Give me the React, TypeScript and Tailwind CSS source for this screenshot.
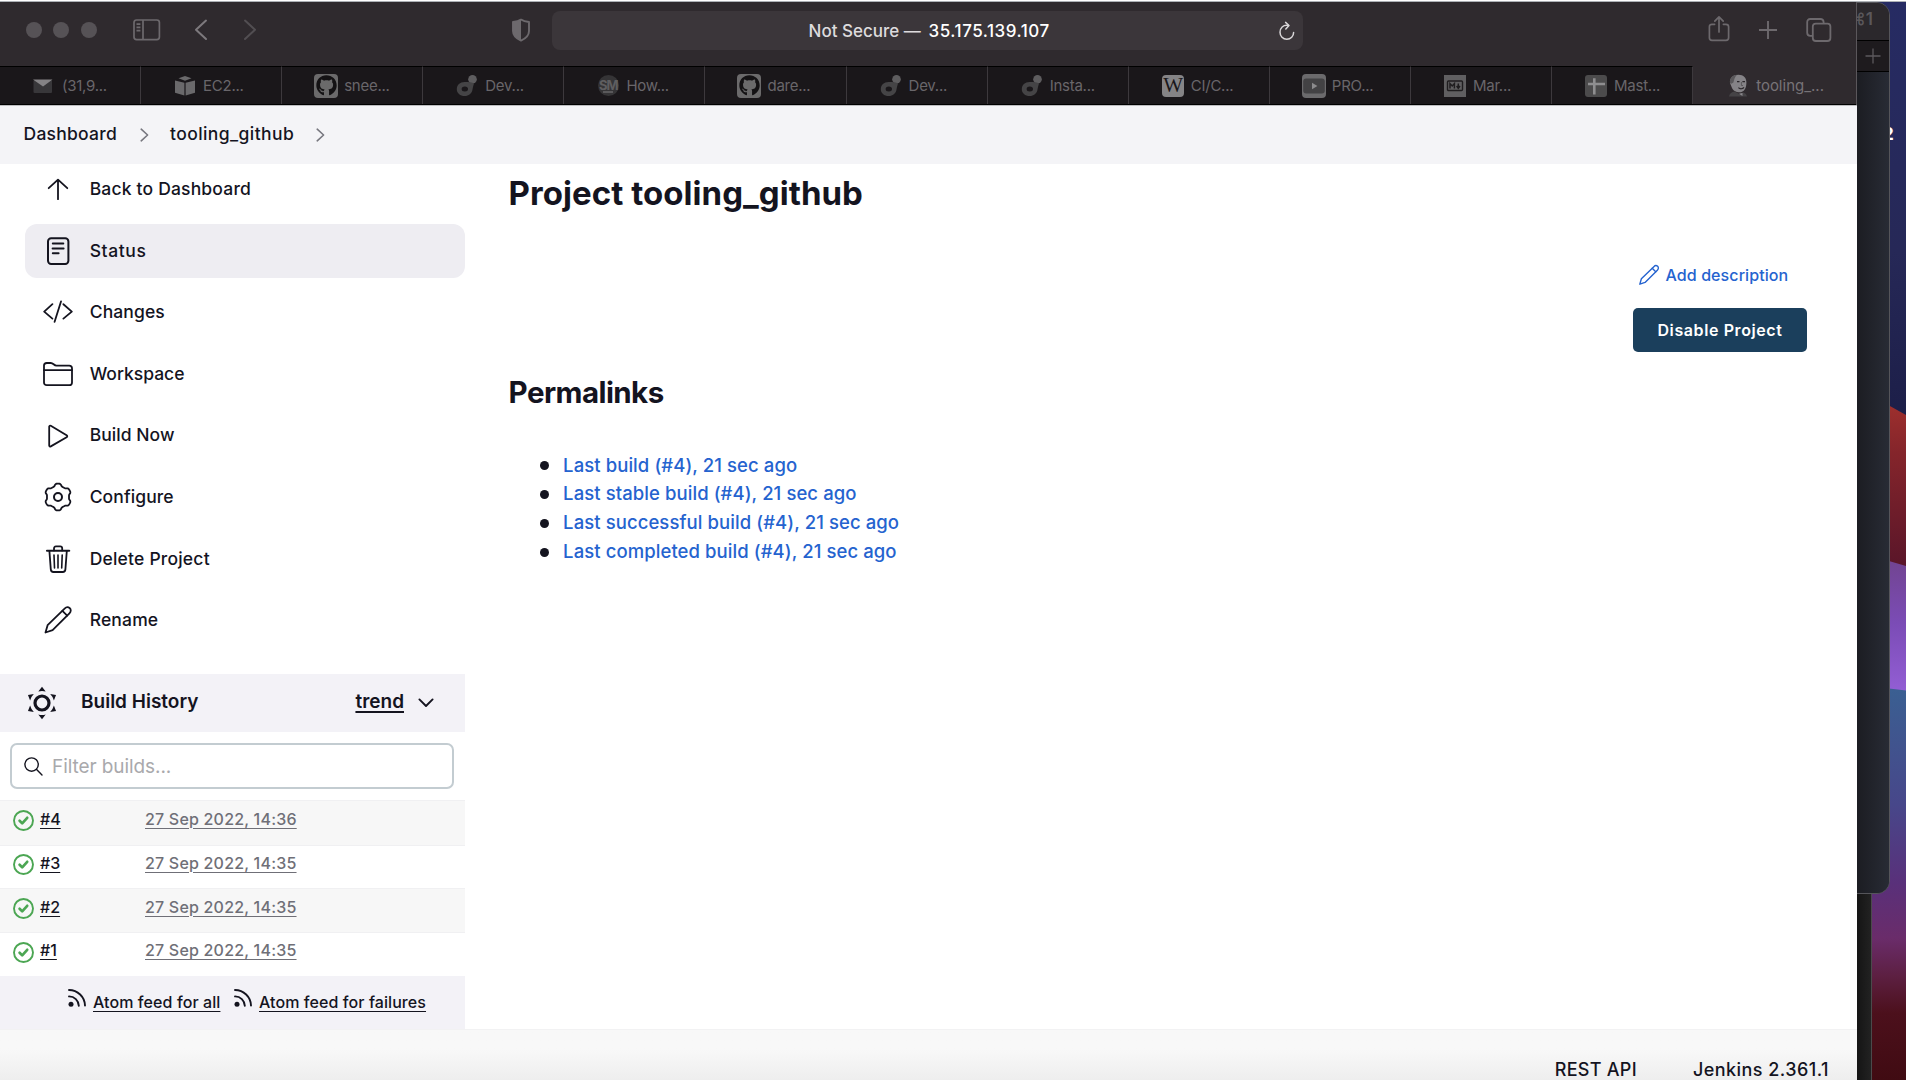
import React from "react";
import { FaGithub } from "react-icons/fa";

const GEAR_PATH =
  Array.from({ length: 120 }, (_, i) => {
    const a = (i / 120) * Math.PI * 2;
    const r = 12.2 + 1.2 * Math.tanh(2.2 * Math.cos(6 * a));
    return `${i ? "L" : "M"}${(15 + r * Math.sin(a)).toFixed(2)} ${(15 - r * Math.cos(a)).toFixed(2)}`;
  }).join("") + "Z";

function Icon({ children, size = 30, sw = 1.8 }: { children: React.ReactNode; size?: number; sw?: number }) {
  return (
    <svg width={size} height={size} viewBox="0 0 30 30" fill="none" stroke="currentColor" strokeWidth={sw} strokeLinecap="round" strokeLinejoin="round" className="shrink-0">
      {children}
    </svg>
  );
}

const PENCIL = (
  <>
    <path d="M2.5 27.5L4.6 20.2L21.6 3.6C23.2 2 25.3 1.9 26.8 3.2C28.2 4.6 28 6.8 26.4 8.4L9.6 25.1Z" />
    <path d="M19.4 5.8L24.2 10.6" />
  </>
);

const NAV = [
  { label: "Back to Dashboard", cls: "tracking-[0.18px]", icon: <path d="M5.7 14.2L15 5.6L24.3 14.2M15 5.8V25.2" /> },
  {
    label: "Status",
    cls: "tracking-[0.6px] font-[550]",
    active: true,
    icon: (
      <>
        <rect x="5" y="2.2" width="20.4" height="25.8" rx="3.2" strokeWidth="2" />
        <path d="M9.8 7.4H20.3M9.6 12.4H20.6M9.8 17.2H15.6" strokeWidth="2" />
      </>
    ),
  },
  { label: "Changes", cls: "tracking-[0.12px]", icon: <path d="M9.4 7.2L1.2 14.6L9.4 21.6M20.4 7.2L28.8 14.6L20.4 21.6M18 4.4L11.6 24.8" /> },
  {
    label: "Workspace",
    cls: "tracking-[0px]",
    icon: (
      <>
        <path d="M1 8V6.6C1 4.9 2.2 4 3.8 4H7.8C10.4 4 10.8 6.6 13.4 6.6H26.2C28 6.6 29 7.6 29 9.2V23.4C29 25 28 26.2 26.2 26.2H3.8C2 26.2 1 25 1 23.4Z" />
        <path d="M1 11.2H29" />
      </>
    ),
  },
  { label: "Build Now", cls: "tracking-[0.05px]", icon: <path d="M6.2 5.6C6.2 4.7 7 4.4 7.8 4.8L23.6 14.2C24.5 14.8 24.5 15.6 23.6 16.2L7.8 25.4C7 25.8 6.2 25.5 6.2 24.6Z" /> },
  {
    label: "Configure",
    cls: "tracking-[0.1px]",
    icon: (
      <>
        <path d={GEAR_PATH} />
        <circle cx="15" cy="15" r="4" strokeWidth="2" />
      </>
    ),
  },
  {
    label: "Delete Project",
    cls: "tracking-[0.2px]",
    icon: (
      <>
        <path d="M4 6.7H26.2" strokeWidth="2.1" />
        <path d="M11 6.4V4.6C11 3.2 11.6 2.4 13 2.4H17.2C18.6 2.4 19.2 3.2 19.2 4.6V6.4" />
        <path d="M6.4 7L7.8 25.4C7.9 27 8.8 28 10.4 28H19.8C21.4 28 22.3 27 22.4 25.4L23.8 7" />
        <path d="M11 11L11.5 24M15 11V24M19.2 11L18.7 24" strokeWidth="1.6" />
      </>
    ),
  },
  { label: "Rename", cls: "tracking-[0.15px]", icon: PENCIL },
];

function TabGithub() {
  return (
    <span className="flex h-6 w-6 items-center justify-center rounded-[4px] bg-[#6b6a6b]">
      <FaGithub size={21} color="#141214" />
    </span>
  );
}
function TabDroplet() {
  return (
    <svg width="24" height="24" viewBox="0 0 24 24">
      <circle cx="17.5" cy="5.2" r="4.3" fill="#5e5d5f" />
      <path d="M9.5 8C14 8 17.5 8 19 9.5C18.5 11 18 12.5 17.5 15.5C17 19.5 13.5 22 9.8 22C5 22 1.8 19 1.8 15.2C1.8 11 5 8 9.5 8Z" fill="#454446" />
      <ellipse cx="9.8" cy="15" rx="3.2" ry="2.5" fill="#1a171a" />
    </svg>
  );
}

const TABS = [
  {
    label: "(31,9...",
    icon: (
      <svg width="24" height="24" viewBox="0 0 24 24">
        <rect x="1.5" y="6" width="18.5" height="13" rx="1" fill="#38373a" />
        <path d="M1 5.5H20.5L11 12.5Z" fill="#858386" />
      </svg>
    ),
  },
  {
    label: "EC2...",
    icon: (
      <svg width="24" height="24" viewBox="0 0 24 24" fill="#6a696b">
        <path d="M12 2L18.5 4.3L12 6.8L5.5 4.3Z" />
        <path d="M2 6.5L11.4 8.8V21.5L2 18.8Z" />
        <path d="M22 6.5L12.6 8.8V21.5L22 18.8Z" />
      </svg>
    ),
  },
  { label: "snee...", icon: <TabGithub /> },
  { label: "Dev...", icon: <TabDroplet /> },
  {
    label: "How...",
    icon: (
      <span className="flex h-[21px] w-[21px] flex-col items-center justify-center rounded-full bg-[#353436] leading-none text-[#5f5e60]">
        <span className="text-[13px] leading-[12px] font-bold tracking-[-1px]">SM</span>
        <span className="h-[2px] w-[10px] bg-[#5a595b]" />
      </span>
    ),
  },
  { label: "dare...", icon: <TabGithub /> },
  { label: "Dev...", icon: <TabDroplet /> },
  { label: "Insta...", icon: <TabDroplet /> },
  {
    label: "CI/C...",
    icon: (
      <span className="flex h-[22px] w-[22px] items-center justify-center overflow-hidden rounded-[4px] bg-[#858486] font-['Liberation_Serif'] text-[21px] leading-none tracking-tighter text-[#1a171a]">
        W
      </span>
    ),
  },
  {
    label: "PRO...",
    icon: (
      <svg width="24" height="24" viewBox="0 0 24 24">
        <rect width="24" height="24" rx="4" fill="#6b6a6c" />
        <rect x="1.2" y="4.5" width="21.6" height="15" rx="3" fill="#434244" />
        <path d="M10 8.8L15.4 12L10 15.2Z" fill="#8c8b8d" />
      </svg>
    ),
  },
  {
    label: "Mar...",
    icon: (
      <svg width="22" height="22" viewBox="0 0 22 22">
        <rect width="22" height="22" fill="#605f61" />
        <rect x="3.5" y="6" width="15" height="9.5" rx="1" fill="none" stroke="#1f1d1f" strokeWidth="1.4" />
        <path d="M6 13.4V8.6L8.2 11L10.4 8.6V13.4M14.3 8.4V12.6M12.6 11L14.3 13.2L16 11" fill="none" stroke="#1f1d1f" strokeWidth="1.5" />
      </svg>
    ),
  },
  {
    label: "Mast...",
    icon: (
      <svg width="22" height="22" viewBox="0 0 22 22">
        <rect width="22" height="22" rx="3" fill="#4c4b4c" />
        <path d="M9.3 3.2V19.5M3 9H20" stroke="#8f8e90" strokeWidth="2.6" />
      </svg>
    ),
  },
];

function JenkinsFace() {
  return (
    <svg width="20" height="23" viewBox="0 0 20 23">
      <path d="M2 9C1.5 4 5 .8 10.4 .8C15.6 .8 18.6 4 18.4 8.6C18.3 12.5 17.6 17 13 18.2C8.5 18.6 4.8 16.8 3.6 13Z" fill="#858387" />
      <path d="M2 9C1.4 4 4.6 1 9 .8C6.6 3 6.4 5.6 5.4 8.4L3.4 9.8Z" fill="#5a585b" />
      <path d="M9 7.6H11.5M14.4 7.6H17" stroke="#2b272b" strokeWidth="1.3" />
      <path d="M13.4 8V11.5H15" stroke="#5a585b" fill="none" />
      <path d="M10.4 13.6C12 15.2 14.6 15.2 16 13.4" stroke="#2b272b" strokeWidth="1.2" fill="none" />
      <path d="M1 22.6C1.4 19.4 4 17.8 6.6 17.4L11 19.8L15.4 18.4C17.4 19 18.6 20.6 19 22.6Z" fill="#454346" />
      <path d="M11 19.8L14.5 19V22Z" fill="#8a888c" />
    </svg>
  );
}

function Toolbar() {
  return (
    <div className="flex h-[64px] shrink-0 items-start bg-[#2f2a2e] pl-[26px] text-[#6d696d]">
      <div className="mt-5 flex gap-[11.3px]">
        <span className="h-4 w-4 rounded-full bg-[#565256]" />
        <span className="h-4 w-4 rounded-full bg-[#565256]" />
        <span className="h-4 w-4 rounded-full bg-[#565256]" />
      </div>
      <svg width="28" height="22" viewBox="0 0 28 22" fill="none" stroke="currentColor" strokeWidth="1.7" className="mt-[17px] ml-[36px]">
        <rect x="1" y="1" width="25.4" height="19.6" rx="2.6" />
        <path d="M10 1V20.6M3.5 5.2H7.4M3.5 8.4H7.4M3.5 11.6H7.4" />
      </svg>
      <svg width="14" height="22" viewBox="0 0 14 22" fill="none" stroke="#7d797d" strokeWidth="2" strokeLinecap="round" strokeLinejoin="round" className="mt-[17px] ml-[33.5px]">
        <path d="M12 1.6L2 10.8L12 20" />
      </svg>
      <svg width="14" height="22" viewBox="0 0 14 22" fill="none" stroke="#524e52" strokeWidth="2" strokeLinecap="round" strokeLinejoin="round" className="mt-[17px] ml-[35px]">
        <path d="M2 1.6L12 10.8L2 20" />
      </svg>
      <svg width="20" height="24" viewBox="0 0 20 24" className="mt-4 ml-[254px]">
        <path d="M10 1.6C12.5 3.4 15.2 3.8 18 4V13C18 17.4 14.5 20.6 10 22.6C5.5 20.6 2 17.4 2 13V4C4.8 3.8 7.5 3.4 10 1.6Z" fill="none" stroke="currentColor" strokeWidth="1.9" strokeLinejoin="round" />
        <path d="M10 1.6V22.6C5.5 20.6 2 17.4 2 13V4C4.8 3.8 7.5 3.4 10 1.6Z" fill="currentColor" />
      </svg>
      <div className="mt-[9px] ml-[21px] flex h-[39px] w-[751px] items-center rounded-lg bg-[#3b363a] pt-[3px] text-[17px]">
        <span className="ml-[256.5px] w-[120px] font-[450] text-[#dddbdd]">Not Secure —</span>
        <span className="flex-1 font-medium tracking-[0.52px] whitespace-nowrap text-white">35.175.139.107</span>
        <svg width="18" height="20" viewBox="0 0 18 20" fill="none" stroke="#d8d6d8" strokeWidth="1.5" strokeLinecap="round" strokeLinejoin="round" className="mr-[7px] mb-[3px]">
          <path d="M10.2 4.4C5 3.6 2 7 2 11.3C2 15.3 5 18.3 8.8 18.3C12.8 18.3 15.6 15.3 15.6 11.6" />
          <path d="M7.6 1.4L11 4.5L7.8 8" />
        </svg>
      </div>
      <svg width="22" height="28" viewBox="0 0 22 28" fill="none" stroke="currentColor" strokeWidth="1.7" strokeLinecap="round" strokeLinejoin="round" className="mt-[13px] ml-[405px]">
        <path d="M6.6 9.3H4C2.4 9.3 1.4 10.2 1.4 11.8V22.8C1.4 24.4 2.4 25.4 4 25.4H18C19.6 25.4 20.6 24.4 20.6 22.8V11.8C20.6 10.2 19.6 9.3 18 9.3H15.4M11 17V2M6.8 6.2L11 1.8L15.2 6.2" />
      </svg>
      <svg width="20" height="20" viewBox="0 0 20 20" stroke="currentColor" strokeWidth="1.9" className="mt-[17.5px] ml-[28px]">
        <path d="M10 1V19M1 10H19" />
      </svg>
      <svg width="26" height="26" viewBox="0 0 26 26" fill="none" stroke="currentColor" strokeWidth="1.8" className="mt-[14.5px] ml-[28px]">
        <path d="M6.8 18.8H4.2C2.4 18.8 1.2 17.6 1.2 15.8V5.2C1.2 3.2 2.4 2 4.2 2H14.4C16.2 2 17.4 3 17.6 4.8V6.4" />
        <rect x="6.8" y="6.6" width="17.6" height="17.4" rx="3" />
      </svg>
    </div>
  );
}

function TabBar() {
  return (
    <div className="flex h-[39px] shrink-0 border-b border-[#000] bg-[#1a171a] text-[15px] text-[#69666a]">
      {TABS.map((t, i) => (
        <div key={i} className="flex w-[141.1px] shrink-0 items-center border-t border-r border-t-black border-r-[#3d393d] pl-8">
          <span className="flex w-6 items-center justify-center">{t.icon}</span>
          <span className="ml-1.5 pt-[1.5px] tracking-[-0.25px]">{t.label}</span>
        </div>
      ))}
      <div className="flex flex-1 items-center bg-[#2f2a2e] pt-px pl-[35px]">
        <JenkinsFace />
        <span className="ml-2 pt-[1.5px] text-[#777377]">tooling_...</span>
      </div>
    </div>
  );
}

function CrumbChevron() {
  return (
    <svg width="9" height="14" viewBox="0 0 9 14" fill="none" stroke="#77777f" strokeWidth="1.6" strokeLinecap="round" strokeLinejoin="round">
      <path d="M1.2 1.2L7.6 7L1.2 12.8" />
    </svg>
  );
}

const BUILDS = [
  { n: "#4", t: "27 Sep 2022, 14:36", cls: "h-[46px] pt-[6.5px] bg-[#f7f7f7] border-y border-[#f0f0f2]" },
  { n: "#3", t: "27 Sep 2022, 14:35", cls: "h-[42px] pt-[5.5px]" },
  { n: "#2", t: "27 Sep 2022, 14:35", cls: "h-[45px] pt-[6.5px] bg-[#f7f7f7] border-y border-[#f0f0f2]" },
  { n: "#1", t: "27 Sep 2022, 14:35", cls: "h-[43px] pt-[6px]" },
];

function FeedIcon() {
  return (
    <svg width="20" height="20" viewBox="0 0 20 20" fill="none" stroke="currentColor" strokeWidth="1.9" strokeLinecap="round">
      <circle cx="4" cy="16.2" r="2.5" fill="currentColor" stroke="none" />
      <path d="M2 8.4C7.4 8.4 11.6 12.4 11.8 17.8M2 2C10.6 2 17.8 8.8 18 17.6" />
    </svg>
  );
}

function Sidebar() {
  return (
    <aside className="flex w-[464.6px] shrink-0 flex-col">
      <nav className="-mt-[2px] flex h-[512px] flex-col gap-[7.2px]">
        {NAV.map((n) => (
          <a
            key={n.label}
            className={
              "ml-[25px] flex h-[54.4px] shrink-0 items-center gap-[17px] rounded-xl pl-[17.7px] text-[17.5px] " +
              (n.active ? "bg-[#eeedf2] " : "font-[450] ") +
              n.cls
            }
          >
            <Icon>{n.icon}</Icon>
            <span className={n.active ? "pt-[1.5px]" : ""}>{n.label}</span>
          </a>
        ))}
      </nav>
      <div className="flex h-[58px] shrink-0 items-center bg-[#f3f2f7] pr-[30.6px] pl-[25px] text-[19px] font-semibold">
        <svg width="34" height="34" viewBox="-17 -17 34 34">
          <circle r="7" fill="none" stroke="currentColor" strokeWidth="3.2" />
          {[0, 60, 120, 180, 240, 300].map((a) => (
            <path key={a} d="M0 -16.2L3.7 -11.6Q0 -12.6 -3.7 -11.6Z" fill="currentColor" transform={`rotate(${a})`} />
          ))}
        </svg>
        <span className="-mt-px ml-[22px] flex-1 tracking-[0px]">Build History</span>
        <span className="-mt-px mr-[14px] underline decoration-[1.5px] underline-offset-[3px]">trend</span>
        <svg width="16" height="10" viewBox="0 0 16 10" fill="none" stroke="currentColor" strokeWidth="1.9" strokeLinecap="round" strokeLinejoin="round">
          <path d="M1.4 1.4L8 8L14.6 1.4" />
        </svg>
      </div>
      <div className="mt-[11px] mr-[11px] mb-[11px] ml-2.5 flex h-[46px] shrink-0 items-center rounded-[7px] border-2 border-[#c3ccd1] pl-3 text-[19px] text-[#a9a9ac]">
        <svg width="19" height="19" viewBox="0 0 19 19" fill="none" stroke="#14141f" strokeWidth="1.4" strokeLinecap="round">
          <circle cx="7.6" cy="7.6" r="6.7" />
          <path d="M12.6 12.6L18 18" />
        </svg>
        <span className="ml-[9px] pt-[2px] tracking-[-0.08px]">Filter builds...</span>
      </div>
      {BUILDS.map((b) => (
        <div key={b.n} className={"flex shrink-0 items-start pl-[13px] text-[16px] font-medium " + b.cls}>
          <svg width="21" height="21" viewBox="0 0 21 21" fill="none" stroke="#4ca653" className="mt-[2.5px]">
            <circle cx="10.5" cy="10.5" r="9.5" strokeWidth="1.9" />
            <path d="M6.6 10.8L9.2 13.4L14.2 7.8" strokeWidth="2.7" strokeLinecap="round" strokeLinejoin="round" />
          </svg>
          <span className="ml-1.5 w-[105px] leading-[22px] font-[550]">
            <span className="underline underline-offset-[3px]">{b.n}</span>
          </span>
          <span className="leading-[22px] tracking-[0.2px] text-[#6f6f77] underline underline-offset-[3px]">{b.t}</span>
        </div>
      ))}
      <div className="flex h-[53px] shrink-0 items-center bg-[#f3f2f7] pb-px pl-[67px] text-[16px] font-medium">
        <span className="-mt-[8px]"><FeedIcon /></span>
        <span className="ml-1.5 w-[140px] tracking-[0.09px]">
          <span className="underline underline-offset-[3px]">Atom feed for all</span>
        </span>
        <span className="-mt-[8px]"><FeedIcon /></span>
        <span className="ml-1.5 tracking-[0.08px] underline underline-offset-[3px]">Atom feed for failures</span>
      </div>
    </aside>
  );
}

const PERMALINKS = [
  "Last build (#4), 21 sec ago",
  "Last stable build (#4), 21 sec ago",
  "Last successful build (#4), 21 sec ago",
  "Last completed build (#4), 21 sec ago",
];

function Main() {
  return (
    <main className="flex flex-1 flex-col pl-[44px]">
      <h1 className="mt-[8.5px] h-10 text-[33px] leading-10 font-bold tracking-[0.05px]">Project tooling_github</h1>
      <div className="mt-[47.5px] mr-[50px] flex w-[174px] flex-col self-end">
        <a className="flex h-[30px] items-center pl-[5px] text-[16px] font-medium text-[#2563cf]">
          <Icon size={22} sw={1.9}>{PENCIL}</Icon>
          <span className="ml-[5.5px] tracking-[0.09px]">Add description</span>
        </a>
        <button className="mt-[18px] flex h-[44px] items-center justify-center rounded-[5px] bg-[#1b3f5c] pb-px text-[16px] font-semibold tracking-[0.6px] text-white">
          Disable Project
        </button>
      </div>
      <h2 className="mt-[19.5px] h-10 text-[29.5px] leading-10 font-bold tracking-[-0.57px]">Permalinks</h2>
      <ul className="mt-[39.5px] ml-[31.5px]">
        {PERMALINKS.map((p) => (
          <li key={p} className="flex h-[28.9px] items-center">
            <span className="mr-[14px] h-[9px] w-[9px] rounded-full bg-[#14141f]" />
            <a className="text-[18.5px] font-medium tracking-[0.08px] text-[#2563cf]">{p}</a>
          </li>
        ))}
      </ul>
    </main>
  );
}

function Wallpaper() {
  return (
    <svg width="50" height="1080" viewBox="0 0 50 1080" preserveAspectRatio="none" className="absolute top-0 right-0">
      <defs>
        <linearGradient id="navy" x1="0" y1="0" x2="0" y2="1"><stop offset="0" stopColor="#262b63" /><stop offset=".6" stopColor="#262857" /><stop offset="1" stopColor="#1c1e48" /></linearGradient>
        <linearGradient id="red" x1="0" y1="0" x2="0" y2="1"><stop offset="0" stopColor="#a6332e" /><stop offset=".35" stopColor="#85252b" /><stop offset="1" stopColor="#581529" /></linearGradient>
        <linearGradient id="violet" x1="0" y1="0" x2="0" y2="1"><stop offset="0" stopColor="#70438c" /><stop offset=".5" stopColor="#7b4cb6" /><stop offset="1" stopColor="#945fd6" /></linearGradient>
        <linearGradient id="dusk" x1="0" y1="0" x2="0" y2="1">
          <stop offset="0" stopColor="#3a6092" /><stop offset=".3" stopColor="#47478a" /><stop offset=".5" stopColor="#59307a" /><stop offset=".64" stopColor="#6a2c6a" />
          <stop offset=".74" stopColor="#5c1f40" /><stop offset=".83" stopColor="#4c101c" /><stop offset="1" stopColor="#400b12" />
        </linearGradient>
      </defs>
      <rect width="50" height="420" fill="url(#navy)" />
      <path d="M0 388L33 405.5L50 415V570H0Z" fill="url(#red)" />
      <path d="M0 552L33 561L50 566V695H0Z" fill="url(#violet)" />
      <path d="M0 686L33 688.5L50 690.5V1080H0Z" fill="url(#dusk)" />
    </svg>
  );
}

function BackWindows() {
  return (
    <>
      <span className="absolute top-[120px] left-[1882.5px] text-[18px] font-bold text-white">2</span>
      <div className="absolute top-[860px] left-[1700px] h-[240px] w-[172px] border-r border-[#4b4a4b] bg-linear-to-r from-[#121212] from-90% to-[#222222]" />
      <div className="absolute top-[2px] left-[1700px] flex h-[892px] w-[190px] flex-col overflow-hidden rounded-[13px] border border-[#55555a] bg-[#262933]">
        <div className="flex h-[38px] shrink-0 items-start border-b border-black bg-[#2b282c] pt-[4px] pl-[148px] text-[17px] font-semibold text-[#5a575b]">⌘1</div>
        <div className="flex h-[31px] shrink-0 items-center justify-end border-b border-black bg-[#1e1b1e] pr-2">
          <svg width="16" height="16" viewBox="0 0 16 16" stroke="#5c595d" strokeWidth="1.3">
            <path d="M8 .5V15.5M.5 8H15.5" />
          </svg>
        </div>
        <div className="flex-1 bg-linear-to-r from-[#1b1c21] from-82% to-[#282b35]" />
      </div>
    </>
  );
}

export default function App() {
  return (
    <div className="relative h-[1080px] w-[1906px] overflow-hidden bg-[#1c1e48] font-['Inter',sans-serif] text-[#14141f]">
      <Wallpaper />
      <BackWindows />
      <div className="relative flex h-full w-[1857px] flex-col bg-white pt-[2px]">
        <Toolbar />
        <TabBar />
        <div className="flex h-[59px] shrink-0 items-center border-t border-[#bdbdc0] bg-[#f4f4f7] pb-px pl-[23.5px] text-[17.5px] font-[450]">
          <span className="w-[116.5px] tracking-[0.25px]">Dashboard</span>
          <CrumbChevron />
          <span className="ml-[21px] w-[146px] tracking-[0.42px]">tooling_github</span>
          <CrumbChevron />
        </div>
        <div className="flex h-[865px] shrink-0">
          <Sidebar />
          <Main />
        </div>
        <footer className="flex flex-1 items-end justify-end gap-[56px] border-t border-[#f2f2f3] bg-linear-to-b from-[#f8f8f8] from-40% to-[#eeeeee] pr-[28px] text-[18px] leading-[20px] font-[450]">
          <span className="tracking-[0.28px]">REST API</span>
          <span className="tracking-[0.46px]">Jenkins 2.361.1</span>
        </footer>
        <div className="absolute top-[2px] right-0 h-[103px] w-px bg-[#5b575b]" />
      </div>
      <div className="absolute inset-x-0 top-0 h-[2px] border-b border-[#adb1b6] bg-white" />
    </div>
  );
}
